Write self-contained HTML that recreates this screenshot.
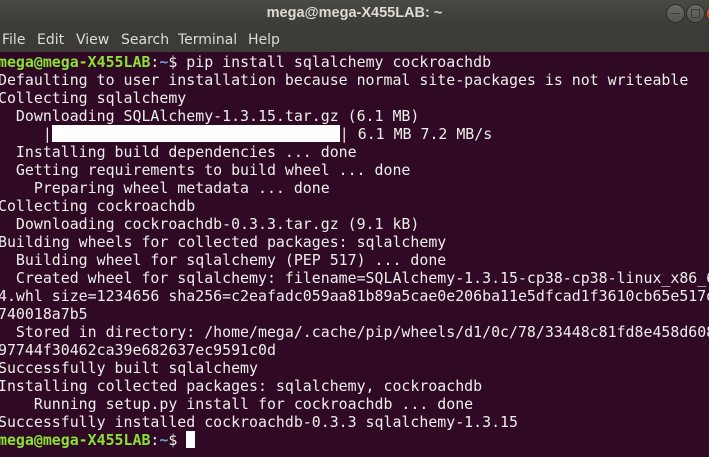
<!DOCTYPE html>
<html><head><meta charset="utf-8"><style>
html,body{margin:0;padding:0;width:709px;height:457px;overflow:hidden;background:#300a24}
#title{position:absolute;left:0;top:0;width:709px;height:27px;background:linear-gradient(#4a4944,#3c3b37);color:#dfdbd2;font:bold 14.5px "Liberation Sans",sans-serif;text-align:center;line-height:26px}
#menu{position:absolute;left:0;top:27px;width:709px;height:25px;background:#3c3b37;color:#dfdbd2;font:14px "DejaVu Sans","Liberation Sans",sans-serif;line-height:26px}
#menu span{position:absolute;top:0}
.btn{position:absolute;top:4px;width:17px;height:17px;border-radius:50%;background:linear-gradient(#6a6964,#55544f);border:1px solid #2e2d2a}
#term{position:absolute;left:-2px;top:53px;width:720px;height:404px;overflow:hidden;font-family:"DejaVu Sans Mono","Liberation Mono",monospace;font-size:14.9px;line-height:18px;color:#eeeeec;white-space:pre}
.g{color:#8ae234;font-weight:bold}.b{color:#729fcf;font-weight:bold}
.w{background:#fff;display:inline-block;height:17px;vertical-align:-3px}
.cur{background:#fff;display:inline-block;width:9px;height:17px;vertical-align:-3px}
</style></head><body>
<div id="title">mega@mega-X455LAB: ~</div>
<div class="btn" style="left:666px"><div style="position:absolute;left:4px;top:8px;width:9px;height:1px;background:#3c3b37"></div></div>
<div class="btn" style="left:686px"><div style="position:absolute;left:4px;top:4px;width:7px;height:7px;border:1px solid #3c3b37"></div></div>
<div class="btn" style="left:706px;background:#e9541f"></div>
<div id="menu"><span style="left:2px">File</span><span style="left:37px">Edit</span><span style="left:76px">View</span><span style="left:121px">Search</span><span style="left:178px">Terminal</span><span style="left:248px">Help</span></div>
<div id="term"><span class="g">mega@mega-X455LAB</span>:<span class="b">~</span>$ pip install sqlalchemy cockroachdb
Defaulting to user installation because normal site-packages is not writeable
Collecting sqlalchemy
  Downloading SQLAlchemy-1.3.15.tar.gz (6.1 MB)
     |<span class="w" style="width:288px"></span>| 6.1 MB 7.2 MB/s
  Installing build dependencies ... done
  Getting requirements to build wheel ... done
    Preparing wheel metadata ... done
Collecting cockroachdb
  Downloading cockroachdb-0.3.3.tar.gz (9.1 kB)
Building wheels for collected packages: sqlalchemy
  Building wheel for sqlalchemy (PEP 517) ... done
  Created wheel for sqlalchemy: filename=SQLAlchemy-1.3.15-cp38-cp38-linux_x86_6
4.whl size=1234656 sha256=c2eafadc059aa81b89a5cae0e206ba11e5dfcad1f3610cb65e517d
740018a7b5
  Stored in directory: /home/mega/.cache/pip/wheels/d1/0c/78/33448c81fd8e458d608
97744f30462ca39e682637ec9591c0d
Successfully built sqlalchemy
Installing collected packages: sqlalchemy, cockroachdb
    Running setup.py install for cockroachdb ... done
Successfully installed cockroachdb-0.3.3 sqlalchemy-1.3.15
<span class="g">mega@mega-X455LAB</span>:<span class="b">~</span>$ <span class="cur"></span></div>
</body></html>
